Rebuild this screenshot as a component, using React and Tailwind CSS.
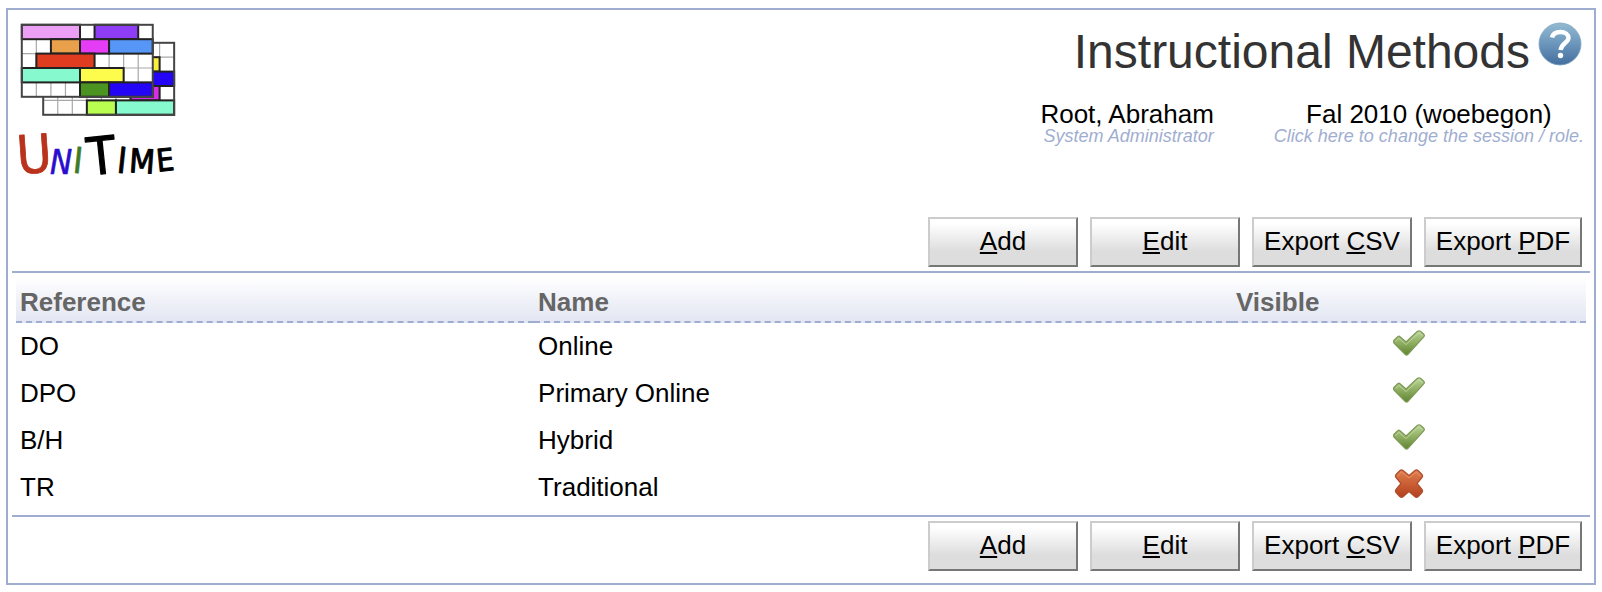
const METHODS = [
  { reference: "DO", name: "Online", visible: true },
  { reference: "DPO", name: "Primary Online", visible: true },
  { reference: "B/H", name: "Hybrid", visible: true },
  { reference: "TR", name: "Traditional", visible: false },
];

const ACTIONS = [
  { before: "", key: "A", after: "dd", width: "w-[150px]" },
  { before: "", key: "E", after: "dit", width: "w-[150px]" },
  { before: "Export ", key: "C", after: "SV", width: "w-[160px]" },
  { before: "Export ", key: "P", after: "DF", width: "w-[158px]" },
];

// Timetable blocks: [column, row, span, colour]
const FRONT = [
  [0, 0, 4, "#eb9ff5"],
  [5, 0, 3, "#8f3df5"],
  [2, 1, 2, "#e8a04a"],
  [4, 1, 2, "#e53df5"],
  [6, 1, 3, "#5596f7"],
  [1, 2, 4, "#e03c20"],
  [0, 3, 4, "#86f9cf"],
  [4, 3, 3, "#fdfb4b"],
  [4, 4, 2, "#4b9422"],
  [6, 4, 3, "#2505f5"],
];
const BACK = [
  [5, 1, 3, "#f8f03c"],
  [6, 2, 3, "#2505f5"],
  [6, 3, 2, "#d62fe6"],
  [3, 4, 2, "#b8fd50"],
  [5, 4, 4, "#86f9cf"],
];
const COL = 14.55;
const ROW = 14.4;

function Timetable({ x, y, blocks }) {
  return (
    <g transform={`translate(${x} ${y})`}>
      <rect width={COL * 9} height={ROW * 5} fill="#fff" />
      <g stroke="#a8a8a8" strokeWidth="1.2">
        {[1, 2, 3, 4, 5, 6, 7, 8].map((c) => (
          <path key={c} d={`M${c * COL} 0V${ROW * 5}`} />
        ))}
        {[1, 2, 3, 4].map((r) => (
          <path key={r} d={`M0 ${r * ROW}H${COL * 9}`} />
        ))}
      </g>
      {blocks.map(([c, r, span, fill]) => (
        <rect key={`${c}-${r}`} x={c * COL} y={r * ROW} width={span * COL} height={ROW} fill={fill} stroke="#222" strokeWidth="2" />
      ))}
      <rect width={COL * 9} height={ROW * 5} fill="none" stroke="#444" strokeWidth="2" />
    </g>
  );
}

function Logo() {
  return (
    <svg width="172" height="176" viewBox="12 20 172 176" role="img" aria-label="UniTime">
      <Timetable x={43.2} y={42.8} blocks={BACK} />
      <Timetable x={21.8} y={24.8} blocks={FRONT} />
      <g fontFamily="'DejaVu Sans Condensed', 'DejaVu Sans', sans-serif" strokeLinejoin="round" textAnchor="middle">
        <text x="34" y="173" fontSize="53" fill="#b8321c" stroke="#b8321c" strokeWidth="0.8" transform="rotate(-4 33 153)">U</text>
        <text x="61" y="174" fontSize="33" fontStyle="italic" fill="#2a0bd0" stroke="#2a0bd0" strokeWidth="0.6">N</text>
        <text x="78" y="173" fontSize="36" fill="#3f7a28" stroke="#3f7a28" strokeWidth="0.6" transform="rotate(6 78 160)">I</text>
        <text x="101" y="174" fontSize="52" fill="#000" stroke="#000" strokeWidth="1.2" transform="rotate(-6 101 153)">T</text>
        <text x="122" y="173" fontSize="36" fill="#000" stroke="#000" strokeWidth="0.8" transform="rotate(6 122 160)">I</text>
        <text x="142" y="173" fontSize="33" fill="#000" stroke="#000" strokeWidth="1" transform="rotate(4 142 161)">M</text>
        <text x="165" y="171" fontSize="31" fill="#000" stroke="#000" strokeWidth="1" transform="rotate(-6 165 158)">E</text>
      </g>
    </svg>
  );
}

function HelpIcon() {
  return (
    <svg width="44" height="44" viewBox="0 0 44 44" aria-hidden="true">
      <defs>
        <linearGradient id="help-fill" x1="0" y1="0" x2="0" y2="1">
          <stop offset="0" stopColor="#94bad2" />
          <stop offset="0.45" stopColor="#6f99bd" />
          <stop offset="1" stopColor="#446f9f" />
        </linearGradient>
      </defs>
      <circle cx="22" cy="22" r="21" fill="url(#help-fill)" stroke="#7fa3c1" strokeWidth="0.8" />
      <path d="M14 15.500C15 11.500 18.500 10 22.500 10C27.500 10 30.500 12.500 30.500 16C30.500 20.500 23.500 21 22.500 28" fill="none" stroke="#fff" strokeWidth="4.4" />
      <circle cx="22.500" cy="33.500" r="2.700" fill="#fff" />
    </svg>
  );
}

function CheckIcon() {
  return (
    <svg className="mx-auto block" width="32" height="32" viewBox="0 0 32 32" role="img" aria-label="Yes">
      <defs>
        <linearGradient id="check-fill" x1="0" y1="0" x2="0" y2="1">
          <stop offset="0" stopColor="#bcd69a" />
          <stop offset="0.5" stopColor="#8fae62" />
          <stop offset="1" stopColor="#5f8530" />
        </linearGradient>
      </defs>
      <path d="M0.800 13.500L5 9.500Q6 8.800 7 9.700L13 15L24.500 4.300Q26 3.200 27.500 4.300L31 7.500Q31.800 8.800 30.700 9.900L15 27.300Q13.500 28.700 12 27.300L1 16Q0.200 14.800 0.800 13.500Z" fill="url(#check-fill)" stroke="#7c9a54" strokeWidth="1.200" />
      <path d="M2.500 14.500L6 11.400L13 17.600L26 5.700L29.300 8.500" fill="none" stroke="#d3e5ba" strokeWidth="1" opacity="0.6" />
    </svg>
  );
}

function CrossIcon() {
  return (
    <svg className="mx-auto block" width="32" height="32" viewBox="0 0 32 32" role="img" aria-label="No">
      <defs>
        <linearGradient id="cross-fill" x1="0" y1="0" x2="0" y2="1">
          <stop offset="0" stopColor="#df7f4e" />
          <stop offset="0.500" stopColor="#cb5f35" />
          <stop offset="1" stopColor="#b2401f" />
        </linearGradient>
      </defs>
      <path d="M7 2.500Q8.500 1.200 10 2.500L16 7.500L22 2.500Q23.500 1.200 25 2.500L29 6.500Q30.300 8 29 9.500L24 15.500L29 21.500Q30.300 23 29 24.500L25 28.700Q23.500 30 22 28.700L16 23.500L10 28.700Q8.500 30 7 28.700L3 24.500Q1.700 23 3 21.500L8 15.500L3 9.500Q1.700 8 3 6.500Z" fill="url(#cross-fill)" stroke="#ad4d2b" strokeWidth="1.200" />
      <path d="M4.500 8L8.500 4L16 10L23.500 4L27.500 8" fill="none" stroke="#efa67f" strokeWidth="1" opacity="0.600" />
    </svg>
  );
}

function Actions() {
  return (
    <div className="flex justify-end gap-3 pr-2">
      {ACTIONS.map(({ before, key, after, width }) => (
        <button
          key={key}
          type="button"
          className={`${width} h-[50px] whitespace-pre border-2 border-t-[#cccccc] border-l-[#cccccc] border-r-[#777777] border-b-[#777777] bg-linear-to-b from-white from-10% to-[#dddddd] to-70% pb-0.5 text-[26px] leading-[30px]`}
        >
          {before}
          <span className="underline decoration-2 underline-offset-2">{key}</span>
          {after}
        </button>
      ))}
    </div>
  );
}

export default function App() {
  return (
    <div className="px-1.5 pt-2 pb-[7px] font-['Liberation_Sans',Arial,sans-serif] text-[26px] leading-[30px] text-black">
      <div className="border-2 border-[#9faed0] bg-white px-1 pb-3">
        <header className="flex h-[207px] items-start justify-between pt-2.5 pr-1.5">
          <Logo />
          <div className="flex flex-col items-end pt-0.5">
            <div className="flex items-start gap-2">
              <h1 className="pt-[6px] text-[48px] leading-[48px] text-[#333333]">Instructional Methods</h1>
              <a href="#help" aria-label="Help" className="pr-0.5">
                <HelpIcon />
              </a>
            </div>
            <div className="flex gap-[60px] pt-[25px]">
              <div className="text-right">
                <div className="leading-[26px]">Root, Abraham</div>
                <a href="#role" className="block text-[18px] leading-[18px] text-[#9faed0] italic">System Administrator</a>
              </div>
              <div className="text-center">
                <div className="leading-[26px]">Fal 2010 (woebegon)</div>
                <a href="#session" className="block text-[18px] leading-[18px] text-[#9faed0] italic">Click here to change the session / role.</a>
              </div>
            </div>
          </div>
        </header>
        <Actions />
        <div className="my-1 border-y-2 border-[#9faed0] px-1 py-1">
          <table className="w-full table-fixed border-separate border-spacing-0 text-left">
            <thead>
              <tr className="bg-linear-to-b from-white to-[#e2e5f2] text-[#666666]">
                <th className="w-[33%] border-b-2 border-dashed border-[#9faed0] px-1 pt-2.5 pb-1">Reference</th>
                <th className="border-b-2 border-dashed border-[#9faed0] px-1 pt-2.5 pb-1">Name</th>
                <th className="w-[354px] border-b-2 border-dashed border-[#9faed0] px-1 pt-2.5 pb-1">Visible</th>
              </tr>
            </thead>
            <tbody>
              {METHODS.map(({ reference, name, visible }) => (
                <tr key={reference} className="h-[47px]">
                  <td className="px-1 pb-0.5">{reference}</td>
                  <td className="px-1 pb-0.5">{name}</td>
                  <td className="px-1 pt-1 align-top">{visible ? <CheckIcon /> : <CrossIcon />}</td>
                </tr>
              ))}
            </tbody>
          </table>
        </div>
        <Actions />
      </div>
    </div>
  );
}
